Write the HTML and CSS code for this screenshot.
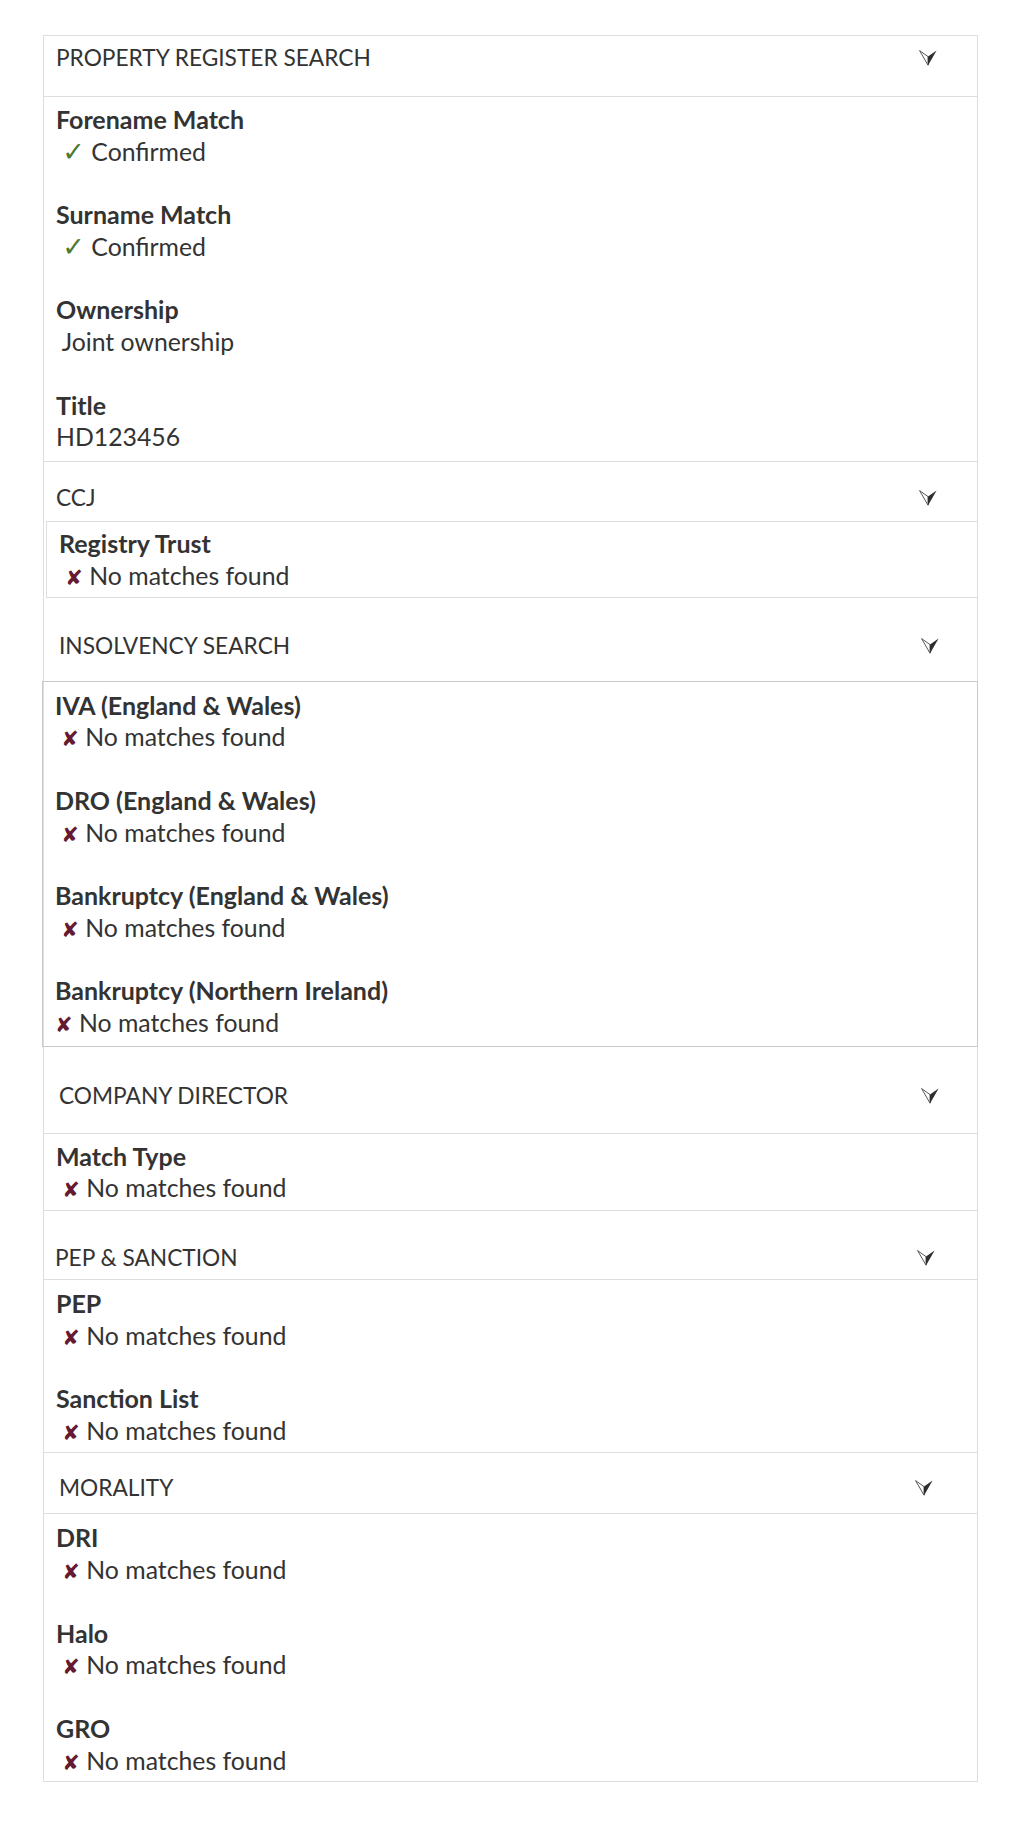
FILE: index.html
```html
<!DOCTYPE html>
<html lang="en">
<head>
<meta charset="utf-8">
<title>Search results</title>
<link rel="stylesheet" href="styles.css">
</head>
<body>
<div class="panel">
  <section class="sec">
    <div class="head head-1"><span class="head-title">PROPERTY REGISTER SEARCH</span><svg class="chev" viewBox="0 0 18 16" width="18" height="16"><polygon points="0.6,0.6 9,6.6 9,15.2" fill="#fff" stroke="#444" stroke-width="0.9"/><polygon points="9,6.6 17.6,0.4 9,15.4" fill="#2e2e2e"/></svg></div>
    <div class="body body-1">
      <div class="item"><div class="label">Forename Match</div><div class="value">&nbsp;<span class="ok">✓</span> Confirmed</div></div>
      <div class="item"><div class="label">Surname Match</div><div class="value">&nbsp;<span class="ok">✓</span> Confirmed</div></div>
      <div class="item"><div class="label">Ownership</div><div class="value">&nbsp;Joint ownership</div></div>
      <div class="item"><div class="label">Title</div><div class="value">HD123456</div></div>
    </div>
  </section>
  <section class="sec">
    <div class="head head-2"><span class="head-title">CCJ</span><svg class="chev" viewBox="0 0 18 16" width="18" height="16"><polygon points="0.6,0.6 9,6.6 9,15.2" fill="#fff" stroke="#444" stroke-width="0.9"/><polygon points="9,6.6 17.6,0.4 9,15.4" fill="#2e2e2e"/></svg></div>
    <div class="body body-2">
      <div class="item"><div class="label">Registry Trust</div><div class="value">&nbsp;<span class="no">✘</span> No matches found</div></div>
    </div>
  </section>
  <section class="sec">
    <div class="head head-3"><span class="head-title">INSOLVENCY SEARCH</span><svg class="chev" viewBox="0 0 18 16" width="18" height="16"><polygon points="0.6,0.6 9,6.6 9,15.2" fill="#fff" stroke="#444" stroke-width="0.9"/><polygon points="9,6.6 17.6,0.4 9,15.4" fill="#2e2e2e"/></svg></div>
    <div class="body body-3">
      <div class="item"><div class="label">IVA (England &amp; Wales)</div><div class="value">&nbsp;<span class="no">✘</span> No matches found</div></div>
      <div class="item"><div class="label">DRO (England &amp; Wales)</div><div class="value">&nbsp;<span class="no">✘</span> No matches found</div></div>
      <div class="item"><div class="label">Bankruptcy (England &amp; Wales)</div><div class="value">&nbsp;<span class="no">✘</span> No matches found</div></div>
      <div class="item"><div class="label">Bankruptcy (Northern Ireland)</div><div class="value"><span class="no">✘</span> No matches found</div></div>
    </div>
  </section>
  <section class="sec">
    <div class="head head-4"><span class="head-title">COMPANY DIRECTOR</span><svg class="chev" viewBox="0 0 18 16" width="18" height="16"><polygon points="0.6,0.6 9,6.6 9,15.2" fill="#fff" stroke="#444" stroke-width="0.9"/><polygon points="9,6.6 17.6,0.4 9,15.4" fill="#2e2e2e"/></svg></div>
    <div class="body body-4">
      <div class="item"><div class="label">Match Type</div><div class="value">&nbsp;<span class="no">✘</span> No matches found</div></div>
    </div>
  </section>
  <section class="sec">
    <div class="head head-5"><span class="head-title">PEP &amp; SANCTION</span><svg class="chev" viewBox="0 0 18 16" width="18" height="16"><polygon points="0.6,0.6 9,6.6 9,15.2" fill="#fff" stroke="#444" stroke-width="0.9"/><polygon points="9,6.6 17.6,0.4 9,15.4" fill="#2e2e2e"/></svg></div>
    <div class="body body-5">
      <div class="item"><div class="label">PEP</div><div class="value">&nbsp;<span class="no">✘</span> No matches found</div></div>
      <div class="item"><div class="label">Sanction List</div><div class="value">&nbsp;<span class="no">✘</span> No matches found</div></div>
    </div>
  </section>
  <section class="sec">
    <div class="head head-6"><span class="head-title">MORALITY</span><svg class="chev" viewBox="0 0 18 16" width="18" height="16"><polygon points="0.6,0.6 9,6.6 9,15.2" fill="#fff" stroke="#444" stroke-width="0.9"/><polygon points="9,6.6 17.6,0.4 9,15.4" fill="#2e2e2e"/></svg></div>
    <div class="body body-6">
      <div class="item"><div class="label">DRI</div><div class="value">&nbsp;<span class="no">✘</span> No matches found</div></div>
      <div class="item"><div class="label">Halo</div><div class="value">&nbsp;<span class="no">✘</span> No matches found</div></div>
      <div class="item"><div class="label">GRO</div><div class="value">&nbsp;<span class="no">✘</span> No matches found</div></div>
    </div>
  </section>
</div>
</body>
</html>
```

FILE: styles.css
```css
html, body {
  margin: 0;
  padding: 0;
  background: #fff;
}
body {
  font-family: Lato, "DejaVu Sans", sans-serif;
  font-size: 24.5px;
  line-height: 31.75px;
  color: #333;
}
.panel {
  margin: 35px 0 0 43px;
  width: 935px;
  box-sizing: border-box;
  border: 1px solid #dedede;
}
.head {
  display: flex;
  align-items: center;
  justify-content: space-between;
  border-bottom: 1px solid #dedede;
}
.head-title {
  font-weight: 400;
  font-size: 22.7px;
}
.chev {
  display: block;
  flex: none;
}
.head-1 { padding: 6px 40px 22px 12px; }
.head-2 { padding: 20px 40px 7px 12px; border-bottom: none; }
.head-3 { padding: 31.5px 38px 19.5px 15px; border-bottom: none; }
.head-4 { padding: 33px 38px 21px 15px; }
.head-5 { padding: 31px 42px 5px 11px; }
.head-6 { padding: 19.2px 44px 9.8px 15px; }

.body {
  border-bottom: 1px solid #dedede;
}
.sec:last-child .body {
  border-bottom: none;
}
.item + .item {
  margin-top: 31.75px;
}
.label {
  font-weight: 700;
  font-size: 25px;
}
.value {
  font-weight: 400;
  font-size: 24.8px;
}
.ok {
  font-family: "DejaVu Sans", sans-serif;
  color: #4c7a2f;
  font-size: 27px;
  line-height: 1;
}
.no {
  font-family: "DejaVu Sans", sans-serif;
  color: #651a31;
  font-size: 21px;
  line-height: 1;
}
.body-1 { padding: 7px 12px 8px; }
.body-2 {
  margin-left: 2px;
  border-left: 1px solid #dedede;
  border-top: 1px solid #dedede;
  padding: 6px 12px 6px;
}
.body-3 {
  margin-left: -2px;
  margin-right: -1px;
  border: 1px solid #c9c9c9;
  padding: 7.5px 12px 7px;
}
.body-4 { padding: 7px 12px 6px; }
.body-5 { padding: 8px 12px 5px; }
.body-6 { padding: 8.2px 12px 5px; }
```
